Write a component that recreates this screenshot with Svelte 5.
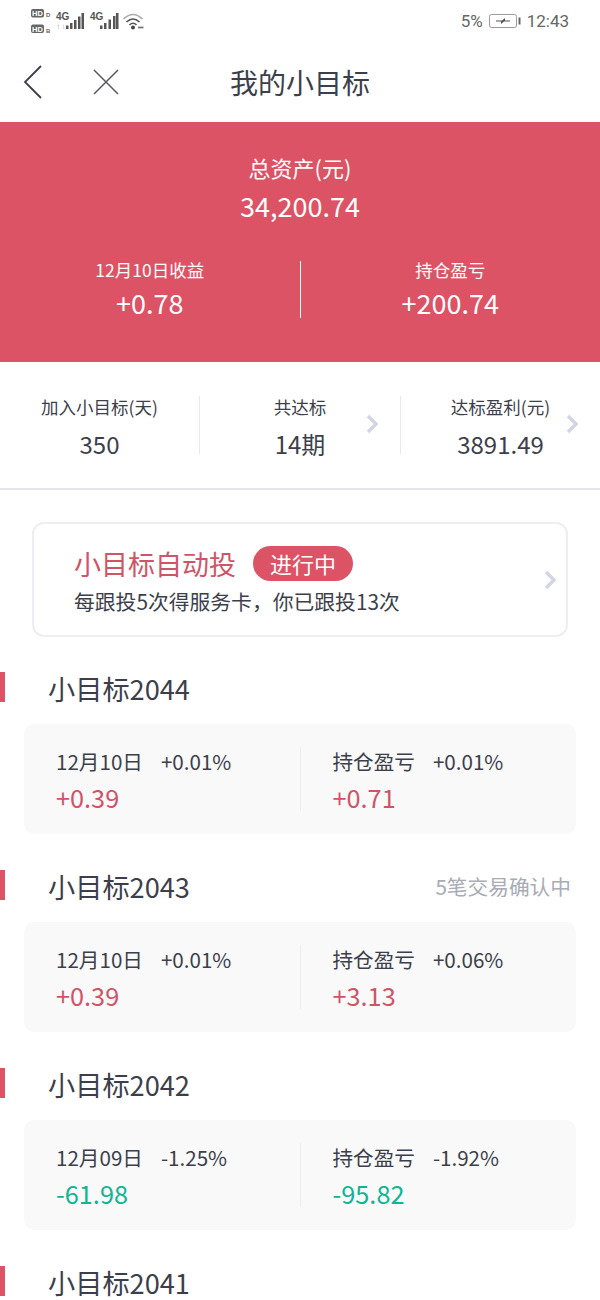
<script>
const stats = [
  { label: '加入小目标(天)', value: '350', arrow: false },
  { label: '共达标', value: '14期', arrow: true },
  { label: '达标盈利(元)', value: '3891.49', arrow: true }
];

const targets = [
  { name: '小目标2044', note: '', date: '12月10日', dayPct: '+0.01%', day: '+0.39', holdPct: '+0.01%', hold: '+0.71', down: false },
  { name: '小目标2043', note: '5笔交易确认中', date: '12月10日', dayPct: '+0.01%', day: '+0.39', holdPct: '+0.06%', hold: '+3.13', down: false },
  { name: '小目标2042', note: '', date: '12月09日', dayPct: '-1.25%', day: '-61.98', holdPct: '-1.92%', hold: '-95.82', down: true }
];
</script>

<div class="page">
  <div class="status">
    <svg class="sys" width="120" height="42" viewBox="0 0 120 42">
      <rect x="1" y="9" width="13" height="8.500" rx="2" fill="#666" />
      <text x="7.500" y="16" class="hd">HD</text>
      <text x="16" y="17" class="tiny">D</text>
      <rect x="1" y="24.500" width="13" height="8.500" rx="2" fill="#666" />
      <text x="7.500" y="31.500" class="hd">HD</text>
      <text x="16" y="33" class="tiny">B</text>
      <text x="26" y="20" class="net">4G</text>
      <text x="26" y="29" class="up">↿⇂</text>
      <path d="M36 25.500h2.500v3.500H36zM40 23h2.500v6H40zM44 20h2.500v9H44zM48 16.500h2.500V29H48zM51.500 13h2.500v16h-2.500z" fill="#555" />
      <text x="60" y="20" class="net">4G</text>
      <path d="M70 25.500h2.500v3.500H70zM74 23h2.500v6H74zM78.500 19.500H81V29h-2.500zM83 16h2.500v13H83zM86 13h2.500v16H86z" fill="#555" />
      <path d="M93.500 19q9.500-9 19 0" fill="none" stroke="#aaa" stroke-width="1.600" />
      <path d="M96.500 22q6.500-6 13 0M99.500 25q3.500-3.500 7 0" fill="none" stroke="#555" stroke-width="1.600" />
      <circle cx="103" cy="27.500" r="2" fill="#444" />
      <path d="M108 27.500h5.500" stroke="#777" stroke-width="1.800" />
    </svg>
    <div class="sys-right">
      <span>5%</span>
      <svg width="32" height="16" viewBox="0 0 32 16">
        <rect x="0.500" y="1.500" width="27" height="13" rx="2" fill="none" stroke="#999" />
        <path d="M29.500 4.500h2v7h-2z" fill="#666" />
        <path d="M7 7.500h6l3-2.500v2.500h5v1h-6l-3 2.500V8.500H7z" fill="#555" />
      </svg>
      <span>12:43</span>
    </div>
  </div>

  <div class="nav">
    <svg class="back" width="22" height="36" viewBox="0 0 22 36">
      <path d="M19 2 3 18l16 16" fill="none" stroke="#3c3f4b" stroke-width="1.800" />
    </svg>
    <svg class="close" width="28" height="28" viewBox="0 0 28 28">
      <path d="M2 2l24 24M26 2 2 26" fill="none" stroke="#55585f" stroke-width="1.500" />
    </svg>
    <h1>我的小目标</h1>
  </div>

  <div class="hero">
    <div class="total-label">总资产(元)</div>
    <div class="total">34,200.74</div>
    <div class="split">
      <div>
        <div class="split-label">12月10日收益</div>
        <div class="split-value">+0.78</div>
      </div>
      <div class="split-line"></div>
      <div>
        <div class="split-label">持仓盈亏</div>
        <div class="split-value">+200.74</div>
      </div>
    </div>
  </div>

  <div class="stats">
    {#each stats as s}
      <div class="stat">
        <div class="stat-label">{s.label}</div>
        <div class="stat-value">{s.value}</div>
        {#if s.arrow}
          <svg class="chev stat-chev" width="13" height="20" viewBox="0 0 13 20">
            <path d="M2 2l8 8-8 8" fill="none" stroke="#d3d5e2" stroke-width="3.500" />
          </svg>
        {/if}
      </div>
    {/each}
  </div>

  <div class="auto">
    <div>
      <div class="auto-top">
        <span class="auto-title">小目标自动投</span>
        <span class="pill">进行中</span>
      </div>
      <div class="auto-sub">每跟投5次得服务卡，你已跟投13次</div>
    </div>
    <svg class="chev" width="13" height="20" viewBox="0 0 13 20">
      <path d="M2 2l8 8-8 8" fill="none" stroke="#d3d5e2" stroke-width="3.500" />
    </svg>
  </div>

  {#each targets as t}
    <div class="target">
      <div class="target-head">
        <div class="target-name">{t.name}</div>
        {#if t.note}<span class="note">{t.note}</span>{/if}
      </div>
      <div class="card">
        <div class="cell">
          <div class="row"><span class="row-a">{t.date}</span><span>{t.dayPct}</span></div>
          <div class="num" class:down={t.down}>{t.day}</div>
        </div>
        <div class="cell-line"></div>
        <div class="cell">
          <div class="row"><span class="row-a">持仓盈亏</span><span>{t.holdPct}</span></div>
          <div class="num" class:down={t.down}>{t.hold}</div>
        </div>
      </div>
    </div>
  {/each}

  <div class="target">
    <div class="target-head">
      <div class="target-name">小目标2041</div>
    </div>
  </div>
</div>

<style>
:global(body) {
  background: #fff;
}

.page {
  color: #3c3f4b;
  font-family: 'Noto Sans CJK SC', 'Noto Sans', sans-serif;
  height: 1300px;
  overflow: hidden;
  width: 600px;
}

.status {
  align-items: center;
  display: flex;
  height: 42px;
  justify-content: space-between;
  padding: 0 31px 0 30px;
}

.sys {
  flex: none;
}

.hd {
  fill: #fff;
  font-family: 'Liberation Sans', sans-serif;
  font-size: 7.500px;
  font-weight: 700;
  text-anchor: middle;
}

.tiny {
  fill: #666;
  font-family: 'Liberation Sans', sans-serif;
  font-size: 6px;
  font-weight: 700;
}

.net {
  fill: #555;
  font-family: 'Liberation Sans', sans-serif;
  font-size: 10px;
  font-weight: 700;
}

.up {
  fill: #bbb;
  font-family: 'DejaVu Sans', sans-serif;
  font-size: 6px;
}

.sys-right {
  align-items: center;
  color: #666;
  display: flex;
  font-family: Roboto, sans-serif;
  font-size: 17px;
  gap: 6px;
}

.nav {
  align-items: center;
  display: flex;
  height: 80px;
  position: relative;
}

.back {
  margin-left: 22px;
}

.close {
  margin-left: 48px;
}

h1 {
  color: #3c3f4b;
  font-size: 28px;
  font-weight: 400;
  left: 0;
  line-height: 40px;
  margin: 0;
  position: absolute;
  right: 0;
  text-align: center;
}

.hero {
  background: #dc5365;
  box-sizing: border-box;
  color: #fff;
  height: 240px;
  padding-top: 29px;
  text-align: center;
}

.total-label {
  font-size: 22px;
  line-height: 32px;
}

.total {
  font-size: 27px;
  line-height: 40px;
  margin-top: 3px;
}

.split {
  align-items: center;
  display: grid;
  grid-template-columns: 1fr 1px 1fr;
  margin-top: 32px;
}

.split-label {
  font-size: 17.500px;
  line-height: 24px;
}

.split-value {
  font-size: 27px;
  line-height: 40px;
  margin-top: 1px;
}

.split-line {
  background: #fff;
  height: 57px;
  margin-top: -2px;
}

.stats {
  border-bottom: 2px solid #e4e4e8;
  box-sizing: border-box;
  display: grid;
  grid-template-columns: 199px 201px 200px;
  height: 128px;
  padding-top: 34px;
}

.stat {
  border-left: 1px solid #e8e8ec;
  box-sizing: border-box;
  height: 58px;
  position: relative;
  text-align: center;
}

.stat:first-child {
  border-left: 0;
}

.stat-label {
  font-size: 17.500px;
  line-height: 22px;
}

.stat-value {
  font-size: 24px;
  line-height: 34px;
  margin-top: 9px;
}

.stat-chev {
  position: absolute;
  right: 21px;
  top: 18px;
}

.auto {
  align-items: center;
  border: 2px solid #eeeef2;
  border-radius: 12px;
  box-sizing: border-box;
  display: flex;
  height: 115px;
  justify-content: space-between;
  margin: 32px 32px 0 32px;
  padding: 0 9px 0 40px;
}

.auto-top {
  align-items: center;
  display: flex;
  gap: 17px;
}

.auto-title {
  color: #cf5468;
  font-size: 27px;
  line-height: 38px;
}

.pill {
  background: #dc5365;
  border-radius: 18px;
  color: #fff;
  font-size: 22px;
  height: 35px;
  line-height: 35px;
  padding: 0 17px;
}

.auto-sub {
  font-size: 20.800px;
  line-height: 28px;
  margin-top: 4px;
}

.target {
  margin-top: 35px;
}

.target + .target {
  margin-top: 36px;
}

.target-head {
  align-items: center;
  border-left: 5px solid #dc5365;
  box-sizing: border-box;
  display: flex;
  height: 30px;
  justify-content: space-between;
  padding: 1px 29px 0 43px;
}

.target-name {
  font-size: 27.200px;
  line-height: 28px;
}

.note {
  color: #a9abb5;
  font-size: 20.700px;
}

.card {
  align-items: center;
  background: #f9f9fa;
  border-radius: 10px;
  display: flex;
  height: 110px;
  margin: 22px 24px 0 24px;
}

.cell {
  box-sizing: border-box;
  flex: 1;
  padding: 3px 0 0 32px;
}

.cell-line {
  background: #eeeef0;
  height: 64px;
  width: 1px;
}

.row {
  display: flex;
  font-size: 20.600px;
  line-height: 28px;
}

.row-a {
  margin-right: 18px;
}

.num {
  color: #cf5468;
  font-size: 25.300px;
  line-height: 36px;
  margin-top: 4px;
}

.num.down {
  color: #10b594;
}
</style>
